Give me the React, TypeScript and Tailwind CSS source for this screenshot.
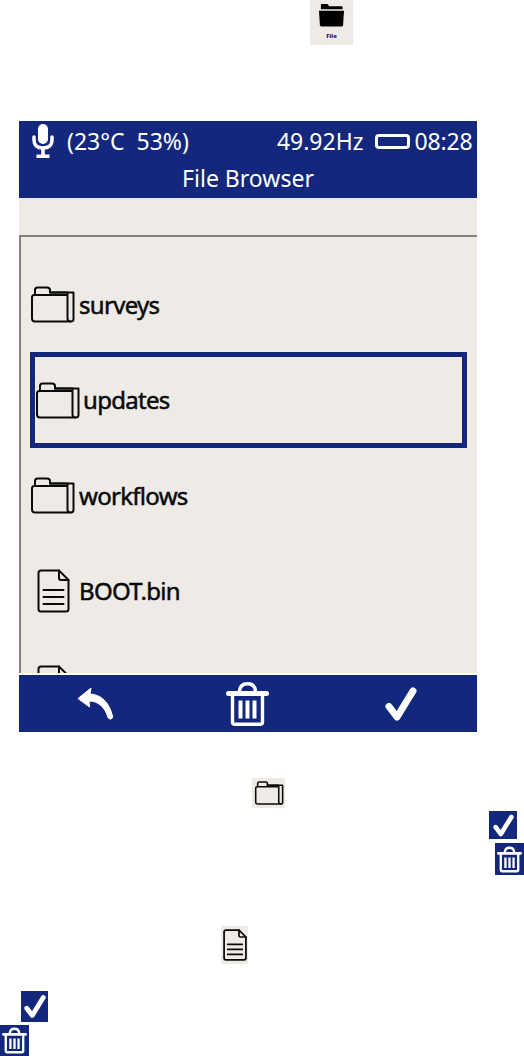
function FolderIcon({ className, sw = 2 }: { className: string; sw?: number }) {
  return (
    <svg viewBox="0 0 45 37" className={className} fill="none" stroke="#0a0a0a" strokeWidth={sw} strokeLinejoin="round" strokeLinecap="round">
      <path d="M2 32.5V11.5Q2 9 4 9H36.5Q37.5 9 37.5 10.5V32.5Q37.5 35.5 40.5 35.5H5Q2 35.5 2 32.5Z" />
      <path d="M5 9V4Q5 1.5 7.5 1.5H17Q20 1.5 20 4V6.5H43.5V33Q43.5 35.5 40.5 35.5" />
      <path d="M20 6.5H37.5V9" />
    </svg>
  );
}

function FileIcon({ className, sw = 2 }: { className: string; sw?: number }) {
  return (
    <svg viewBox="0 0 33 44" className={className} fill="none" stroke="#0a0a0a" strokeWidth={sw} strokeLinejoin="round" strokeLinecap="round">
      <path d="M22 1.5H4Q1.5 1.5 1.5 4V40Q1.5 42.5 4 42.5H29Q31.5 42.5 31.5 40V11Z" />
      <path d="M22 1.5V9Q22 11 24 11H31.5" />
      <path d="M6.5 21H26.5M6.5 28H26.5M6.5 35H26.5" />
    </svg>
  );
}

function Check({ className }: { className: string }) {
  return (
    <svg viewBox="0 0 32 34" className={className} fill="none" stroke="#fff" strokeWidth="7" strokeLinecap="round" strokeLinejoin="round">
      <path d="M4 19.5L12 30L28 4" />
    </svg>
  );
}

function Trash({ className, sw = 3.4 }: { className: string; sw?: number }) {
  return (
    <svg viewBox="0 0 43 44" className={className} fill="none" stroke="#fff" strokeLinecap="round" strokeLinejoin="round">
      <path d="M2.5 11.5H40.5" strokeWidth="5" />
      <path d="M13.5 9C14 4 17 1.8 21.5 1.8S29 4 29.5 9" strokeWidth={sw} />
      <path d="M6.5 12V40Q6.5 42.2 9 42.2H34Q36.5 42.2 36.5 40V12" strokeWidth={sw} />
      <path d="M14.5 18.5V36.5M21.5 18.5V36.5M28.5 18.5V36.5" strokeWidth="4" strokeLinecap="butt" />
    </svg>
  );
}

function SmallTile({ children, className }: { children: React.ReactNode; className: string }) {
  return <div className={`flex items-center justify-center bg-[#13277d] ${className}`}>{children}</div>;
}

function Row({ label, kind }: { label: string; kind: "folder" | "file" }) {
  return (
    <div className="flex h-[95.5px] shrink-0 items-center pl-[9px]">
      {kind === "folder" ? (
        <FolderIcon className="h-[37px] w-[45px]" />
      ) : (
        <div className="flex w-[45px] justify-end pr-[5px]">
          <FileIcon className="h-[44px] w-[33px]" />
        </div>
      )}
      <span className="ml-[4px] text-[24px] leading-none tracking-[-0.7px] text-[#0a0a0a] [-webkit-text-stroke:0.5px_#0a0a0a]">{label}</span>
    </div>
  );
}

export default function App() {
  return (
    <div className="relative h-[1056px] w-[524px] overflow-hidden bg-white font-['Noto_Sans','Open_Sans',sans-serif]">
      <div className="ml-[310px] flex h-[45px] w-[43px] flex-col items-center bg-[#eeebe6]">
        <svg viewBox="0 0 28 24" className="mt-[3px] h-[24px] w-[27px]" fill="#000">
          <path d="M3 1.5Q3 0.5 4 0.5H9Q10.5 0.5 11 2L11.5 3H24.5Q25.5 3 25.5 4V6H3Z" />
          <path d="M1 7.5H27L26 22.5Q26 24 24 24H4Q2 24 2 22.5Z" />
        </svg>
        <span className="mt-[6px] text-[6px] font-bold leading-none text-black">File</span>
      </div>

      <div className="ml-[19px] mt-[76px] flex h-[611px] w-[458px] flex-col bg-white">
        <div className="h-[77px] shrink-0 bg-[#13277d] text-white">
          <div className="flex h-[38px] items-center pl-[13px] pt-[2px] text-[23px] leading-none">
            <svg viewBox="0 0 22 34" className="h-[34px] w-[22px]" fill="none">
              <rect x="6" y="0" width="10" height="20" rx="5" fill="#fff" />
              <path d="M2 13V16Q2 24 11 24T20 16V13" stroke="#fff" strokeWidth="3.5" strokeLinecap="round" />
              <path d="M11 24V31" stroke="#fff" strokeWidth="3.5" />
              <rect x="4.5" y="30.5" width="13" height="3.5" fill="#fff" />
            </svg>
            <span className="ml-[13px] whitespace-pre">(23°C  53%)</span>
            <span className="ml-[88px]">49.92Hz</span>
            <span className="ml-[11px] h-[15px] w-[35px] rounded-[4px] border-[3px] border-white" />
            <span className="ml-[5px] tracking-[-0.2px]">08:28</span>
          </div>
          <div className="pt-[5px] text-center text-[23px] leading-[28px]">File Browser</div>
        </div>

        <div className="h-[37px] shrink-0 bg-[#eeebe6]" />

        <div className="h-[438px] shrink-0 overflow-hidden border-l-2 border-t-2 border-[#85827d] bg-[#eeebe6] pt-[20px]">
          <Row label="surveys" kind="folder" />
          <div className="-mt-[0.5px] ml-[9px] mr-[10px] flex h-[96px] shrink-0 items-center border-[5px] border-[#13277d]">
            <FolderIcon className="h-[37px] w-[45px]" />
            <span className="ml-[3px] text-[24px] leading-none tracking-[-0.7px] text-[#0a0a0a] [-webkit-text-stroke:0.5px_#0a0a0a]">updates</span>
          </div>
          <Row label="workflows" kind="folder" />
          <Row label="BOOT.bin" kind="file" />
          <Row label="" kind="file" />
        </div>

        <div className="mt-[2px] grid h-[57px] shrink-0 grid-cols-3 items-center justify-items-center bg-[#13277d]">
          <svg viewBox="0 0 35 32" className="h-[32px] w-[35px]" fill="#fff">
            <path d="M13 0L0 10.5L11.5 19L11 13C20 13 27 19 30 29.5Q31 31.5 33 31Q35 30.5 34.5 28C31 14 23 6.5 12 6Z" stroke="#fff" strokeWidth="1" strokeLinejoin="round" />
          </svg>
          <Trash className="h-[44px] w-[43px]" />
          <Check className="h-[34px] w-[32px]" />
        </div>
      </div>

      <div className="ml-[252px] mt-[46px] flex h-[30px] w-[33px] items-center justify-center bg-[#eeebe6]">
        <FolderIcon className="h-[24px] w-[30px]" sw={2.4} />
      </div>
      <SmallTile className="ml-[489px] mt-[3px] h-[28px] w-[28px]">
        <Check className="h-[23px] w-[21px]" />
      </SmallTile>
      <SmallTile className="ml-[495px] mt-[4px] h-[32px] w-[29px]">
        <Trash className="h-[27px] w-[25px]" sw={4} />
      </SmallTile>
      <div className="ml-[221px] mt-[51px] flex h-[38px] w-[27px] items-center justify-center bg-[#eeebe6]">
        <FileIcon className="h-[32px] w-[24px]" sw={2.4} />
      </div>
      <SmallTile className="ml-[21px] mt-[27px] h-[31px] w-[27px]">
        <Check className="h-[25px] w-[22px]" />
      </SmallTile>
      <SmallTile className="ml-0 mt-[3px] h-[31px] w-[29px]">
        <Trash className="h-[27px] w-[25px]" sw={4} />
      </SmallTile>
    </div>
  );
}
